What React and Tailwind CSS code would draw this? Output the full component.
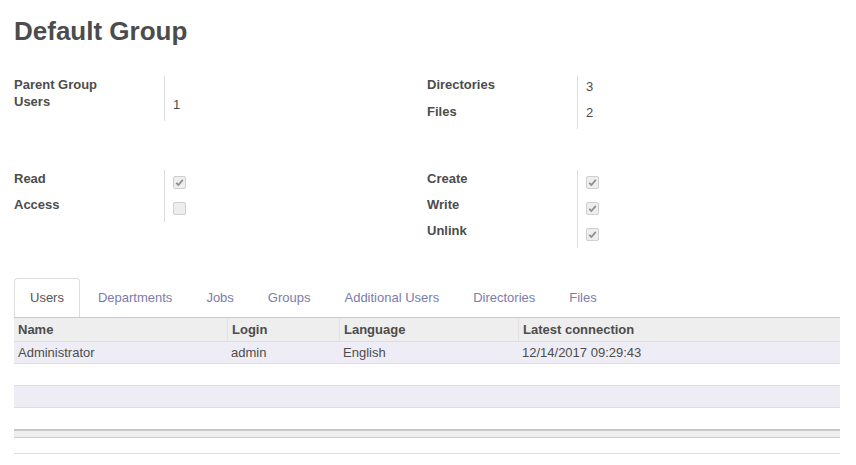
import React from "react";

function Check({ checked }) {
  return (
    <span className="mt-[6px] flex h-[13px] w-[13px] items-center justify-center rounded-[2px] border border-[#cfcfcf] bg-[#eeeeee]">
      {checked && (
        <svg width="9" height="9" viewBox="0 0 9 9">
          <path d="M1.2 4.8 L3.4 7 L7.8 1.8" fill="none" stroke="#8f8f8f" strokeWidth="1.8" />
        </svg>
      )}
    </span>
  );
}

function Row({ label, h, children, valuePt = "pt-0" }) {
  return (
    <div className="flex" style={{ height: h }}>
      <div className="w-[150px] shrink-0 font-bold leading-[17px]">{label}</div>
      <div className={`flex-1 border-l border-[#dcdcdc] pl-[8px] leading-[17px] ${valuePt}`}>{children}</div>
    </div>
  );
}

const tabs = ["Users", "Departments", "Jobs", "Groups", "Additional Users", "Directories", "Files"];

export default function App() {
  return (
    <div className="h-[465px] w-[856px] overflow-hidden bg-white pl-[14px] pr-[16px] font-['Liberation_Sans',Arial,sans-serif] text-[13px] text-[#4c4c4c]">
      <h1 className="mt-[16px] text-[26px] font-bold leading-[30px] text-[#4c4c4c]">Default Group</h1>

      <div className="mt-[30px] grid h-[53px] grid-cols-2">
        <div>
          <Row label="Parent Group" h={17} />
          <Row label="Users" h={28} valuePt="pt-[3px]">1</Row>
        </div>
        <div>
          <Row label="Directories" h={27} valuePt="pt-[2px]">3</Row>
          <Row label="Files" h={26} valuePt="pt-[1px]">2</Row>
        </div>
      </div>

      <div className="mt-[41px] grid h-[78px] grid-cols-2">
        <div>
          <Row label="Read" h={26}><Check checked /></Row>
          <Row label="Access" h={26}><Check /></Row>
        </div>
        <div>
          <Row label="Create" h={26}><Check checked /></Row>
          <Row label="Write" h={26}><Check checked /></Row>
          <Row label="Unlink" h={26}><Check checked /></Row>
        </div>
      </div>

      <div className="mt-[30px] flex h-[39px]">
        {tabs.map((t, i) =>
          i === 0 ? (
            <div key={t} className="mr-[2px] rounded-t-[4px] border border-b-0 border-[#dddddd] bg-white px-[15px] pt-[10px] leading-[18px] text-[#555555]">
              {t}
            </div>
          ) : (
            <div key={t} className="mr-[2px] border border-b-0 border-transparent px-[15px] pt-[10px] leading-[18px] text-[#7c7bad]">
              {t}
            </div>
          )
        )}
      </div>

      <div className="w-[826px]">
        <div className="grid h-[25px] grid-cols-[213px_112px_179px_322px] border-b border-t border-b-[#dddddd] border-t-[#cacaca] bg-[#eeeeee] font-bold">
          <div className="px-[4px] pt-[1px] leading-[22px]">Name</div>
          <div className="border-l border-[#e2e2e2] px-[4px] pt-[1px] leading-[22px]">Login</div>
          <div className="border-l border-[#e2e2e2] px-[4px] pt-[1px] leading-[22px]">Language</div>
          <div className="border-l border-[#e2e2e2] px-[4px] pt-[1px] leading-[22px]">Latest connection</div>
        </div>
        <div className="grid h-[22px] grid-cols-[213px_112px_179px_322px] border-b border-[#dddddd] bg-[#eeedf6] leading-[21px]">
          <div className="px-[4px]">Administrator</div>
          <div className="px-[4px]">admin</div>
          <div className="px-[4px]">English</div>
          <div className="px-[4px]">12/14/2017 09:29:43</div>
        </div>
        <div className="h-[22px] border-b border-[#dddddd] bg-white" />
        <div className="h-[22px] border-b border-[#dddddd] bg-[#eeedf6]" />
        <div className="h-[21px] bg-white" />
        <div className="h-[9px] border-b border-t-2 border-b-[#cccccc] border-t-[#c8c8c8] bg-[#eeeeee]" />
        <div className="mt-[15px] h-px bg-[#dddddd]" />
      </div>
    </div>
  );
}
